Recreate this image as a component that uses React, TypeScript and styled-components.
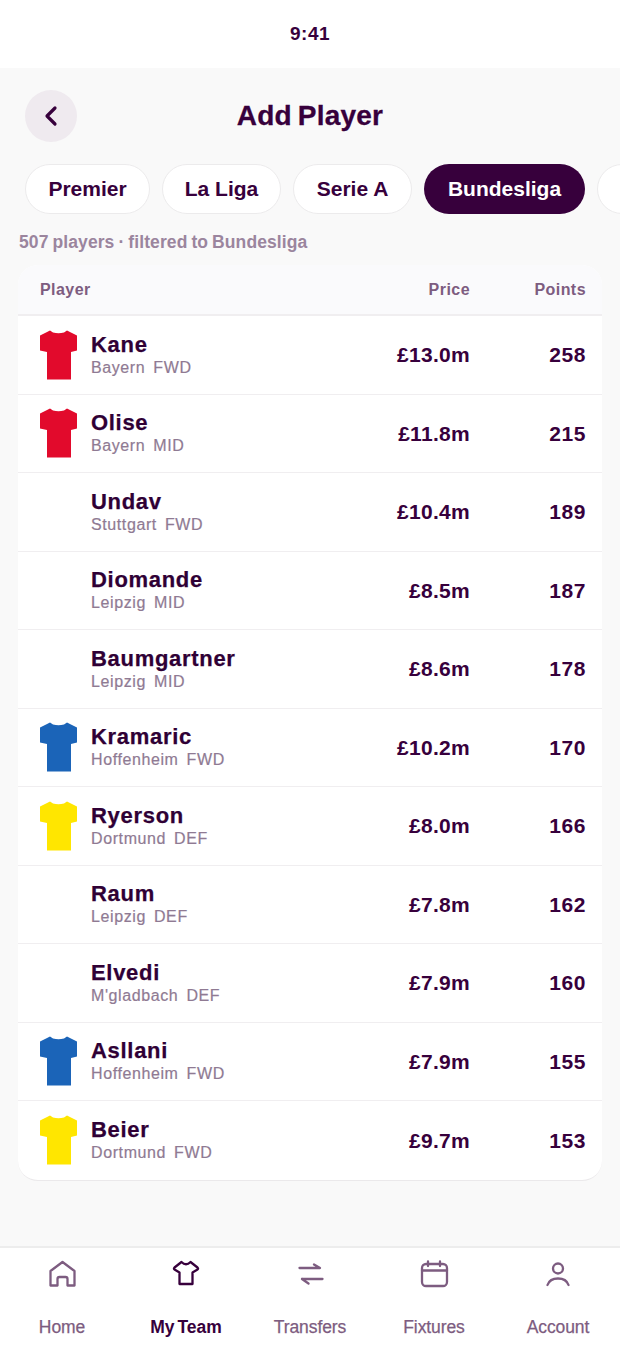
import React from "react";
import styled, { createGlobalStyle } from "styled-components";
import { ChevronLeft } from "lucide-react";

const Global = createGlobalStyle`
  html, body { margin: 0; padding: 0; background: #f9f9f9; }
  * { box-sizing: border-box; }
  body { font-family: "Liberation Sans", Arial, sans-serif; color: #37003c; }
`;
const Screen = styled.div`
  width: 620px; height: 1347px; display: flex; flex-direction: column; overflow: hidden; background: #f9f9f9;
`;
const StatusBar = styled.div`
  height: 68px; background: #fff; display: flex; align-items: center; justify-content: center;
  font-size: 19px; font-weight: 700; letter-spacing: 0.5px;
`;
const Main = styled.main`
  flex: 1; display: flex; flex-direction: column; min-height: 0;
`;
const Header = styled.header`
  position: relative; height: 52px; margin: 22px 25px 0; display: flex; align-items: center; justify-content: center;
`;
const BackButton = styled.button`
  position: absolute; left: 0; top: 0; width: 52px; height: 52px; border: 0; border-radius: 50%;
  background: #efeaef; color: #37003c; display: flex; align-items: center; justify-content: center; padding: 0;
`;
const Title = styled.h1`
  margin: 0; font-size: 28px; font-weight: 700; letter-spacing: 0.2px; word-spacing: -2px; color: #37003c;
  -webkit-text-stroke: 0.3px #37003c;
`;
const Chips = styled.div`
  display: flex; gap: 12px; margin-top: 22px; padding-left: 25px; height: 50px; overflow: hidden;
`;
const Chip = styled.div<{ $active?: boolean; $w: number }>`
  flex: none; height: 50px; border-radius: 25px; display: flex; align-items: center; justify-content: center;
  width: ${(p) => p.$w}px;
  background: ${(p) => (p.$active ? "#37003c" : "#fff")};
  color: ${(p) => (p.$active ? "#fff" : "#37003c")};
  border: ${(p) => (p.$active ? "0" : "1.5px solid #ecebec")};
  font-size: 21px; font-weight: 700;
`;
const Summary = styled.div`
  margin: 18px 0 0 19px; height: 20px; line-height: 20px; font-size: 17.5px; font-weight: 700; color: #9b859e;
  letter-spacing: 0.1px; word-spacing: -1px;
`;
const Table = styled.section`
  margin: 13px 18px 0; background: #fff; border-radius: 20px; overflow: hidden;
  border-bottom: 1.5px solid #ebe9eb;
`;
const HeadRow = styled.div`
  height: 51px; display: grid; grid-template-columns: 1fr 110px 116px; align-items: center; padding: 0 16px 0 22px;
  background: #fafafc; border-bottom: 2px solid #f0eef0;
  font-size: 16px; font-weight: 700; letter-spacing: 0.45px; color: #7d5c80;
`;
const Right = styled.div`
  text-align: right;
`;
const Row = styled.div`
  height: 78.5px; display: grid; grid-template-columns: 1fr 110px 116px; align-items: center; padding: 0 16px 0 22px;
  border-bottom: 1.5px solid #f0eef0;
  &:last-child { border-bottom: 0; }
`;
const PlayerCell = styled.div`
  display: flex; align-items: center; gap: 14px;
`;
const KitSlot = styled.div`
  width: 37px; height: 50px; flex: none;
`;
const Names = styled.div`
  display: flex; flex-direction: column; padding-top: 1px;
`;
const Name = styled.div`
  font-size: 22px; line-height: 24px; font-weight: 700; color: #2f0035; letter-spacing: 0.7px;
  -webkit-text-stroke: 0.25px #2f0035;
`;
const Sub = styled.div`
  font-size: 16px; line-height: 21px; font-weight: 400; color: #8f7a93; letter-spacing: 0.6px; word-spacing: 3px; -webkit-text-stroke: 0.2px #8f7a93;
`;
const Price = styled(Right)`
  font-size: 21px; font-weight: 700; letter-spacing: 0.3px; color: #37003c; padding-top: 1px;
`;
const Points = styled(Right)`
  font-size: 21px; font-weight: 700; letter-spacing: 0.6px; color: #37003c; padding-top: 1px;
`;
const Nav = styled.nav`
  height: 101px; background: #fff; border-top: 2px solid #ededed; display: grid; grid-template-columns: repeat(5, 1fr);
`;
const NavItem = styled.div<{ $active?: boolean }>`
  display: flex; flex-direction: column; align-items: center; padding-top: 10px;
  color: ${(p) => (p.$active ? "#37003c" : "#7d5c80")};
`;
const NavIconSvg = styled.svg.attrs({ viewBox: "0 0 32 32", width: 32, height: 32, fill: "none" })`
  flex: none;
  stroke: currentColor; stroke-width: 2.3; stroke-linecap: round; stroke-linejoin: round;
`;
const NavLabel = styled.span<{ $active?: boolean }>`
  margin-top: 27px; font-size: 17.5px; line-height: 20px; letter-spacing: ${(p) => (p.$active ? "0" : "-0.1px")};
  word-spacing: ${(p) => (p.$active ? "-2px" : "0")};
  font-weight: ${(p) => (p.$active ? 700 : 400)};
  -webkit-text-stroke: ${(p) => (p.$active ? "0" : "0.25px")};
`;

const Kit = ({ color }: { color: string }) => (
  <svg width="37" height="50" viewBox="0 0 37 50">
    <path d="M10 0.5 L13 2.5 Q18.5 4 24 2.5 L27 0.5 L37 5.5 V20.5 L31 22 V49.5 H7 V22 L0 20.5 V5.5 Z" fill={color} />
  </svg>
);

const icons: Record<string, React.ReactNode> = {
  Home: <path d="M4.5 27.5 V13 L16.5 4 L28.5 13 V27.5 H21.5 V21 q0-2-2-2 h-6 q-2 0-2 2 V27.5 Z" />,
  "My Team": <path d="M9.5 14.5 L4.5 11.5 Q3.5 10.5 4.5 9.5 L11.5 4 Q16 8.5 20.5 4 L27.5 9.5 Q28.5 10.5 27.5 11.5 L22.5 14.5 V26 H9.5 Z" />,
  Transfers: <path d="M5.5 10 H26 L20 6.5 M8 21 H28.5 M8 21 L14.5 25.5" />,
  Fixtures: (
    <>
      <rect x="4" y="6" width="25" height="22" rx="4" />
      <path d="M4 12.5 H29 M10 3.5 V8 M22 3.5 V8" />
    </>
  ),
  Account: (
    <>
      <circle cx="16" cy="10.5" r="5" />
      <path d="M5.5 27 C7 22.5 11 20.5 16 20.5 C21 20.5 25 22.5 26.5 27" />
    </>
  ),
};

const RED = "#e20a2c", BLUE = "#1b64b8", YEL = "#ffe600";
const players: [string, string, string, string, number, string?][] = [
  ["Kane", "Bayern", "FWD", "£13.0m", 258, RED],
  ["Olise", "Bayern", "MID", "£11.8m", 215, RED],
  ["Undav", "Stuttgart", "FWD", "£10.4m", 189],
  ["Diomande", "Leipzig", "MID", "£8.5m", 187],
  ["Baumgartner", "Leipzig", "MID", "£8.6m", 178],
  ["Kramaric", "Hoffenheim", "FWD", "£10.2m", 170, BLUE],
  ["Ryerson", "Dortmund", "DEF", "£8.0m", 166, YEL],
  ["Raum", "Leipzig", "DEF", "£7.8m", 162],
  ["Elvedi", "M'gladbach", "DEF", "£7.9m", 160],
  ["Asllani", "Hoffenheim", "FWD", "£7.9m", 155, BLUE],
  ["Beier", "Dortmund", "FWD", "£9.7m", 153, YEL],
];
const chips: [string, number, boolean?][] = [
  ["Premier", 125], ["La Liga", 119], ["Serie A", 119], ["Bundesliga", 161, true], ["", 100],
];
const navs = ["Home", "My Team", "Transfers", "Fixtures", "Account"];

export default function App() {
  return (
    <Screen>
      <Global />
      <StatusBar>9:41</StatusBar>
      <Main>
        <Header>
          <BackButton><ChevronLeft size={32} strokeWidth={2.4} /></BackButton>
          <Title>Add Player</Title>
        </Header>
        <Chips>
          {chips.map(([t, w, a], i) => (
            <Chip key={i} $active={a} $w={w}>{t}</Chip>
          ))}
        </Chips>
        <Summary>507 players · filtered to Bundesliga</Summary>
        <Table>
          <HeadRow><div>Player</div><Right>Price</Right><Right>Points</Right></HeadRow>
          {players.map(([n, c, pos, price, pts, col]) => (
            <Row key={n}>
              <PlayerCell>
                <KitSlot>{col && <Kit color={col} />}</KitSlot>
                <Names>
                  <Name>{n}</Name>
                  <Sub>{c} {pos}</Sub>
                </Names>
              </PlayerCell>
              <Price>{price}</Price>
              <Points>{pts}</Points>
            </Row>
          ))}
        </Table>
      </Main>
      <Nav>
        {navs.map((label) => {
          const active = label === "My Team";
          return (
            <NavItem key={label} $active={active}>
              <NavIconSvg>{icons[label]}</NavIconSvg>
              <NavLabel $active={active}>{label}</NavLabel>
            </NavItem>
          );
        })}
      </Nav>
    </Screen>
  );
}
